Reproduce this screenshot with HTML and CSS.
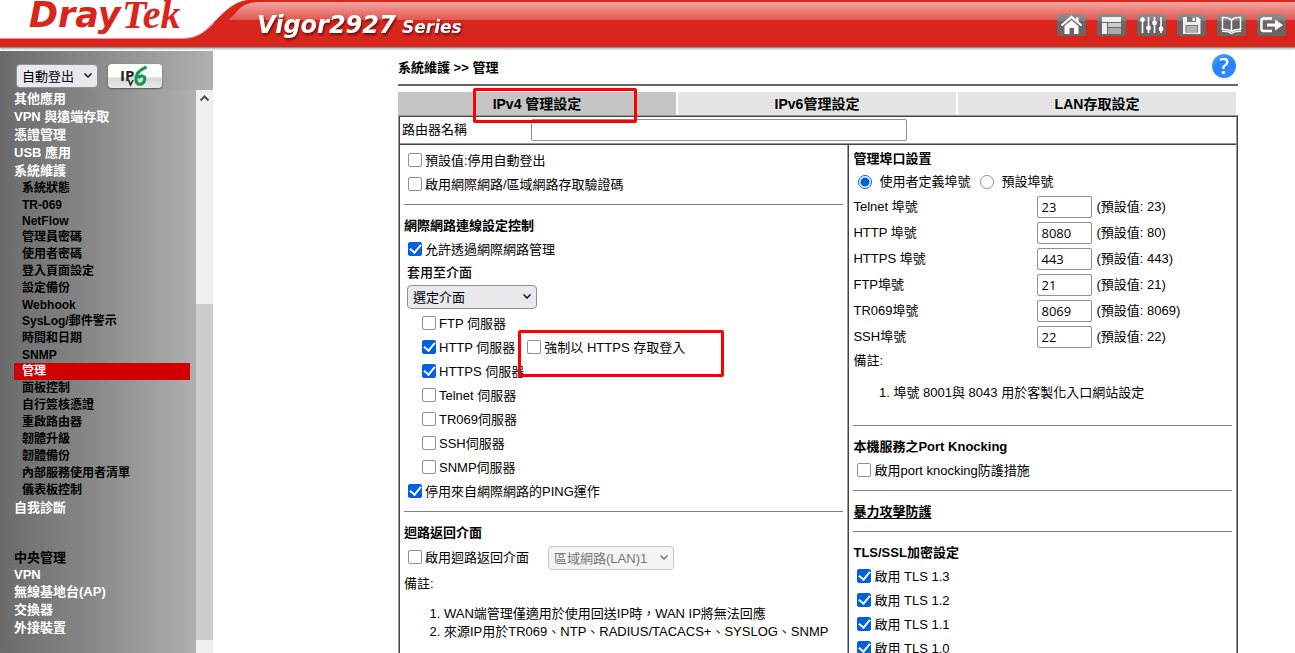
FILE: index.html
```html
<!DOCTYPE html>
<html lang="zh-Hant">
<head>
<meta charset="utf-8">
<title>Vigor2927 Series</title>
<link rel="stylesheet" href="styles.css">
</head>
<body>
<header class="banner">
  <svg class="brand" width="480" height="47" viewBox="0 0 480 47" role="img" aria-label="DrayTek Vigor2927 Series">
    <path d="M184 39C210 38 218 20 229 20L240 8C245 4 250 2 262 2L262 0L0 0L0 39Z" fill="#d9261c"/>
    <path d="M184 47L184 36L230 20H240V47Z" fill="#d9261c"/>
    <path d="M0 0H247C234 2 226 10 214 22C204 32 198 38 184 38H0Z" fill="#fff"/>
    <path d="M0 38.500H184C198 38 206 31 214 23" fill="none" stroke="#f0958f"/>
    <text class="brand-dray" x="29" y="27">Dray</text>
    <text class="brand-tek" x="122" y="28">Tek</text>
    <text class="brand-model" x="257" y="33">Vigor2927</text>
    <text class="brand-series" x="402" y="33">Series</text>
  </svg>
  <nav class="tools" aria-label="工具">
    <button class="tool" aria-label="首頁"><svg width="29" height="22" viewBox="0 0 29 22"><path d="M4.500 11.500L14.500 3L24.500 11.500" fill="none" stroke="#fff" stroke-width="2.200"/><path d="M19 3.500H21.500V8L19 6Z" fill="#fff"/><path d="M7.500 12L14.500 6.200L21.500 12V20H17V14H12.500V20H7.500Z" fill="#fff"/></svg></button>
    <button class="tool" aria-label="儀表板"><svg width="29" height="22" viewBox="0 0 29 22"><path d="M5 3H24V8H5ZM5 9H10V20H5Z" fill="#eee"/><path d="M11 9H24V13H11Z" fill="#ccc"/><path d="M11 14H24V20H11Z" fill="#aaa"/></svg></button>
    <button class="tool" aria-label="設定"><svg width="29" height="22" viewBox="0 0 29 22"><path d="M5.500 3V19M11.500 3V19M17.500 3V19M24 3V19" stroke="#fff" stroke-width="1.600"/><g fill="#fff"><circle cx="5.500" cy="6" r="2.400"/><circle cx="11.500" cy="14" r="2.400"/><circle cx="17.500" cy="9" r="2.400"/><circle cx="24" cy="15" r="2.400"/></g></svg></button>
    <button class="tool" aria-label="儲存"><svg width="29" height="22" viewBox="0 0 29 22"><path d="M6 3H21L23.500 5.500V20H6Z" fill="#eee"/><path d="M10 3H19V8H10ZM8.500 11H21V18.500H8.500Z" fill="#777"/><path d="M15.500 3.500H18V7H15.500ZM9.500 12.500H20V13.500H9.500ZM9.500 14.500H20V15.500H9.500ZM9.500 16.500H20V17.500H9.500Z" fill="#eee"/></svg></button>
    <button class="tool" aria-label="說明文件"><svg width="29" height="22" viewBox="0 0 29 22"><path d="M14.500 6C12 3.500 9 3.200 5.500 3.500V15.500C9 15.200 12 15.500 14.500 17.500C17 15.500 20 15.200 23.500 15.500V3.500C20 3.200 17 3.500 14.500 6ZM14.500 6V17" fill="none" stroke="#fff" stroke-width="1.500"/><path d="M5 17.500C9 17.200 12 17.500 14.500 19.500C17 17.500 20 17.200 24 17.500" fill="none" stroke="#fff" stroke-width="1.200"/></svg></button>
    <button class="tool" aria-label="登出"><svg width="29" height="22" viewBox="0 0 29 22"><path d="M15 4.500H6.500Q4.500 4.500 4.500 6.500V15Q4.500 17 6.500 17H15" fill="none" stroke="#fff" stroke-width="2.400"/><path d="M10 9.500H18V5.500L26 11L18 16.500V12.500H10Z" fill="#fff"/></svg></button>
  </nav>
</header>
<div class="page">
  <aside class="side">
    <div class="side-top">
      <span class="pick pick-side"><select class="drop" aria-label="自動登出"><option>自動登出</option></select><svg class="chev" width="8" height="5" viewBox="0 0 8 5"><path d="M0.500 0.500L4 4L7.500 0.500"/></svg></span>
      <button class="ipv6" aria-label="IPv6"><svg width="54" height="24" viewBox="0 0 54 24"><text class="ip" x="12" y="17">IP</text><path d="M20.500 16L22.500 21L25 16" fill="none" stroke="#222" stroke-width="1.500"/><path d="M38.500 3C31 6 27.500 11 28 16C28.500 21.500 35 21.500 36.500 16.500C38 11.500 33 10.500 30 14" fill="none" stroke="#0d9a4e" stroke-width="3"/></svg></button>
    </div>
    <div class="side-body">
      <nav class="menu" aria-label="主選單">
        <a href="#" class="item">其他應用</a>
        <a href="#" class="item">VPN 與遠端存取</a>
        <a href="#" class="item">憑證管理</a>
        <a href="#" class="item">USB 應用</a>
        <a href="#" class="item">系統維護</a>
        <a href="#" class="sub">系統狀態</a>
        <a href="#" class="sub latin">TR-069</a>
        <a href="#" class="sub latin">NetFlow</a>
        <a href="#" class="sub">管理員密碼</a>
        <a href="#" class="sub">使用者密碼</a>
        <a href="#" class="sub">登入頁面設定</a>
        <a href="#" class="sub">設定備份</a>
        <a href="#" class="sub latin">Webhook</a>
        <a href="#" class="sub">SysLog/郵件警示</a>
        <a href="#" class="sub">時間和日期</a>
        <a href="#" class="sub latin">SNMP</a>
        <a href="#" class="sub current">管理</a>
        <a href="#" class="sub">面板控制</a>
        <a href="#" class="sub">自行簽核憑證</a>
        <a href="#" class="sub">重啟路由器</a>
        <a href="#" class="sub">韌體升級</a>
        <a href="#" class="sub">韌體備份</a>
        <a href="#" class="sub">內部服務使用者清單</a>
        <a href="#" class="sub">儀表板控制</a>
        <a href="#" class="item">自我診斷</a>
        <span class="item section">中央管理</span>
        <a href="#" class="item latin">VPN</a>
        <a href="#" class="item">無線基地台(AP)</a>
        <a href="#" class="item">交換器</a>
        <a href="#" class="item">外接裝置</a>
      </nav>
      <div class="bar" aria-hidden="true">
        <svg width="17" height="17" viewBox="0 0 17 17"><path d="M4.500 10.500L8.500 6.500L12.500 10.500" fill="none" stroke="#505050" stroke-width="2"/></svg>
        <div class="bar-above"></div>
        <div class="bar-thumb"></div>
        <div class="bar-below"></div>
      </div>
    </div>
  </aside>
  <main class="main">
    <div class="crumb">
      <h1 class="crumb-text">系統維護 &gt;&gt; 管理</h1>
      <button class="help" aria-label="說明">?</button>
    </div>
    <div class="tabs">
      <button class="tab active">IPv4 管理設定<span class="mark mark-tab"></span></button>
      <button class="tab">IPv6管理設定</button>
      <button class="tab">LAN存取設定</button>
    </div>
    <form class="panel">
      <div class="name-row">
        <label for="rname" class="name-label">路由器名稱</label>
        <input type="text" id="rname" class="box name-box">
      </div>
      <div class="cols">
        <section class="col col-left">
          <label class="row"><input type="checkbox" class="tick">預設值:停用自動登出</label>
          <label class="row"><input type="checkbox" class="tick">啟用網際網路/區域網路存取驗證碼</label>
          <hr class="rule">
          <h2 class="head">網際網路連線設定控制</h2>
          <label class="row"><input type="checkbox" class="tick" checked>允許透過網際網路管理</label>
          <label class="apply" for="iface">套用至介面</label>
          <div class="apply-pick"><span class="pick pick-iface"><select class="drop" id="iface"><option>選定介面</option></select><svg class="chev" width="8" height="5" viewBox="0 0 8 5"><path d="M0.500 0.500L4 4L7.500 0.500"/></svg></span></div>
          <div class="servers">
            <label class="row"><input type="checkbox" class="tick">FTP 伺服器</label>
            <div class="pair">
              <label class="row"><input type="checkbox" class="tick" checked>HTTP 伺服器</label>
              <label class="row forced"><input type="checkbox" class="tick">強制以 HTTPS 存取登入<span class="mark mark-https"></span></label>
            </div>
            <label class="row"><input type="checkbox" class="tick" checked>HTTPS 伺服器</label>
            <label class="row"><input type="checkbox" class="tick">Telnet 伺服器</label>
            <label class="row"><input type="checkbox" class="tick">TR069伺服器</label>
            <label class="row"><input type="checkbox" class="tick">SSH伺服器</label>
            <label class="row"><input type="checkbox" class="tick">SNMP伺服器</label>
          </div>
          <label class="row"><input type="checkbox" class="tick" checked>停用來自網際網路的PING運作</label>
          <hr class="rule">
          <h2 class="head">迴路返回介面</h2>
          <div class="loop">
            <label class="row"><input type="checkbox" class="tick">啟用迴路返回介面</label>
            <span class="pick pick-lan"><select class="drop" aria-label="迴路返回介面" disabled><option>區域網路(LAN)1</option></select><svg class="chev" width="8" height="5" viewBox="0 0 8 5"><path d="M0.500 0.500L4 4L7.500 0.500"/></svg></span>
          </div>
          <p class="note">備註:</p>
          <ol class="list">
            <li>WAN端管理僅適用於使用回送IP時，WAN IP將無法回應</li>
            <li>來源IP用於TR069、NTP、RADIUS/TACACS+、SYSLOG、SNMP</li>
          </ol>
        </section>
        <section class="col col-right">
          <h2 class="head head-ports">管理埠口設置</h2>
          <div class="radios">
            <label class="radio"><input type="radio" name="port" class="dot" checked>使用者定義埠號</label>
            <label class="radio"><input type="radio" name="port" class="dot">預設埠號</label>
          </div>
          <div class="port"><label for="p1">Telnet 埠號</label><input type="text" class="box" id="p1" value="23"><span>(預設值: 23)</span></div>
          <div class="port"><label for="p2">HTTP 埠號</label><input type="text" class="box" id="p2" value="8080"><span>(預設值: 80)</span></div>
          <div class="port"><label for="p3">HTTPS 埠號</label><input type="text" class="box" id="p3" value="443"><span>(預設值: 443)</span></div>
          <div class="port"><label for="p4">FTP埠號</label><input type="text" class="box" id="p4" value="21"><span>(預設值: 21)</span></div>
          <div class="port"><label for="p5">TR069埠號</label><input type="text" class="box" id="p5" value="8069"><span>(預設值: 8069)</span></div>
          <div class="port"><label for="p6">SSH埠號</label><input type="text" class="box" id="p6" value="22"><span>(預設值: 22)</span></div>
          <p class="note note-ports">備註:</p>
          <ol class="list list-ports">
            <li>埠號 8001與 8043 用於客製化入口網站設定</li>
          </ol>
          <hr class="rule">
          <h2 class="head">本機服務之Port Knocking</h2>
          <label class="row"><input type="checkbox" class="tick">啟用port knocking防護措施</label>
          <hr class="rule">
          <a href="#" class="head brute">暴力攻擊防護</a>
          <hr class="rule">
          <h2 class="head">TLS/SSL加密設定</h2>
          <label class="row"><input type="checkbox" class="tick" checked>啟用 TLS 1.3</label>
          <label class="row"><input type="checkbox" class="tick" checked>啟用 TLS 1.2</label>
          <label class="row"><input type="checkbox" class="tick" checked>啟用 TLS 1.1</label>
          <label class="row"><input type="checkbox" class="tick" checked>啟用 TLS 1.0</label>
        </section>
      </div>
    </form>
  </main>
</div>
</body>
</html>
```
FILE: styles.css
```css
* { box-sizing: border-box; }

body {
  margin: 0;
  height: 100vh;
  display: flex;
  flex-direction: column;
  overflow: hidden;
  background: #fff;
  color: #000;
  font: 13px/24px "Liberation Sans", "Noto Sans CJK TC", sans-serif;
}

button, select, input { font: inherit; color: inherit; margin: 0; }
button { border: 0; padding: 0; }
h1, h2, p { margin: 0; font-size: inherit; }

/* Banner */
.banner {
  flex: none;
  display: flex;
  justify-content: space-between;
  align-items: flex-start;
  height: 47px;
  margin-bottom: 4px;
  background: linear-gradient(#d9261c 2px, #f2a5a0 2px, #e2574f 20px, #d9261c 20px);
  box-shadow: 0 1px 0 #8f8f8f, 0 2px 2px #aaa;
}
.brand { display: block; overflow: visible; }
.brand-dray { font: italic 700 35px "DejaVu Sans", sans-serif; fill: #d9261c; }
.brand-tek { font: italic 700 40px "Liberation Serif", serif; fill: #d9261c; }
.brand-model, .brand-series { fill: #fff; filter: drop-shadow(1px 2px 1px #611); }
.brand-model { font: italic 700 24px "DejaVu Sans", sans-serif; }
.brand-series { font: italic 700 17px "DejaVu Sans", sans-serif; }
.tools { display: flex; gap: 11px; padding: 14px 9px 0 0; }
.tool {
  width: 29px;
  height: 22px;
  border-radius: 3px;
  background: linear-gradient(#9a8b8a, #857a79 7px, #6b6565 7px, #6b6565);
}
.tool svg { display: block; }

/* Sidebar */
.page { flex: 1; min-height: 0; display: flex; }
.side { width: 213px; flex: none; display: flex; flex-direction: column; }
.side-top {
  display: flex;
  gap: 10px;
  height: 39px;
  padding: 13px 16px 0;
  background: linear-gradient(to right, #6b6b6b, #b0b0b0);
}
.side-body { flex: 1; min-height: 0; display: flex; }
.menu {
  flex: 1;
  overflow: hidden;
  padding-left: 14px;
  background: linear-gradient(to right, #6b6b6b, #8a8a8a 50%, #b0b0b0);
}
.item, .sub { display: block; font-weight: 700; text-decoration: none; }
.item { color: #fff; line-height: 18px; }
.sub { color: #000; font-size: 12px; line-height: 17px; padding-left: 8px; margin-right: 6px; }
.latin { line-height: 16px; }
.current { color: #fff; background: #d00000; }
.section { color: #000; margin-top: 32px; }
.bar { width: 17px; display: flex; flex-direction: column; background: #f0f0f0; }
.bar-above { flex: 197; }
.bar-thumb { flex: 335; background: #cdcdcd; }
.bar-below { flex: 13; }
.ipv6 {
  width: 54px;
  height: 24px;
  border-radius: 4px;
  background: linear-gradient(#fff 50%, #d8d8d8 60%, #e8e8e8);
  box-shadow: 0 1px 2px #555;
}
.ipv6 svg { display: block; }
.ip { font: 700 15px "Open Sans", sans-serif; fill: #222; }

/* Controls */
.pick { position: relative; display: block; }
.pick-side { width: 82px; }
.pick-iface { width: 130px; }
.pick-lan { width: 126px; }
.drop {
  display: block;
  appearance: none;
  width: 100%;
  height: 24px;
  padding: 0 5px;
  border: 1px solid #8f8f9d;
  border-radius: 4px;
  background: #e9e9ed;
}
.drop:disabled { color: #77777a; background: #f4f4f6; border-color: #c7c7ce; opacity: 1; }
.chev { position: absolute; right: 6px; top: 9px; pointer-events: none; }
.chev path { fill: none; stroke: #111; stroke-width: 1.5; }
.drop:disabled + .chev path { stroke: #777; }
.box {
  height: 22px;
  padding: 0 3px;
  border: 1px solid #8f8f9d;
  border-radius: 2px;
  background: #fff;
  font-family: "Open Sans", sans-serif;
}
.tick, .dot {
  appearance: none;
  flex: none;
  width: 14px;
  height: 14px;
  border: 1px solid #8f8f9d;
  background: #fff;
}
.tick { border-radius: 2px; display: grid; place-content: center; }
.tick:checked { background: #0060df; border-color: #0060df; }
.tick:checked::before {
  content: "";
  width: 5px;
  height: 9px;
  margin-bottom: 3px;
  border: solid #fff;
  border-width: 0 2px 2px 0;
  transform: rotate(40deg);
}
.dot { border-radius: 50%; }
.dot:checked { border: 1px solid #0060df; background: radial-gradient(#0060df 4px, #fff 5px); }

/* Content */
.main { flex: 1; min-width: 0; padding: 0 57px 0 185px; }
.crumb {
  display: flex;
  justify-content: space-between;
  align-items: center;
  height: 35px;
  border-bottom: 2px solid #666;
}
.crumb-text { font-size: 13px; }
.help {
  width: 24px;
  height: 24px;
  margin: 0 2px 4px 0;
  border-radius: 50%;
  background: radial-gradient(circle at 60% 75%, #2b8cff, #2a80ff 50%, #66b2ff);
  color: #fff;
  font: 600 21px/24px "Open Sans", sans-serif;
}
.tabs { display: grid; grid-template-columns: repeat(3, 1fr); gap: 2px; margin: 6px 2px 0 0; }
.tab {
  position: relative;
  height: 23px;
  background: #e4e4e4;
  font-size: 14px;
  line-height: 24px;
  font-weight: 700;
}
.tab.active { background: #c5c5c5; }
.mark { position: absolute; z-index: 1; border: 3px solid #f00; border-radius: 2px; pointer-events: none; }
.mark-tab { left: 75px; top: -4px; width: 164px; height: 35px; }
.mark-https { left: -9px; top: -6px; width: 206px; height: 47px; }
.panel { border: 2px ridge #999; }
.name-row {
  display: flex;
  align-items: center;
  height: 28px;
  padding-left: 2px;
  border-bottom: 2px ridge #999;
}
.name-label { width: 129px; }
.name-box { width: 376px; }
.cols { display: grid; grid-template-columns: 450fr 387fr; }
.col { min-width: 0; padding: 4px 4px 12px; }
.col-left { border-right: 2px ridge #999; }
.col-right { padding-top: 3px; }
.row { display: flex; align-items: center; gap: 3px; height: 24px; padding-left: 4px; }
.row .tick { margin-bottom: 2px; }
.rule { height: 1px; margin: 7px 0 9px; border: 0; background: #808080; }
.head { display: block; font-weight: 700; height: 24px; }
.head-ports { height: 22px; line-height: 22px; }
.apply { display: block; padding-left: 3px; font-weight: 500; line-height: 22px; }
.apply-pick { height: 28px; padding: 1px 3px 0; }
.servers { padding-left: 14px; }
.pair { display: flex; gap: 12px; }
.forced { position: relative; padding-left: 0; }
.loop { display: flex; align-items: center; gap: 19px; height: 26px; }
.note { line-height: 26px; }
.note-ports { line-height: 22px; }
.list { margin: 8px 0 0; padding-left: 40px; line-height: 18px; }
.list-ports { margin: 12px 0 23px; }
.radios { display: flex; gap: 10px; height: 24px; padding-left: 5px; }
.radio { display: flex; align-items: center; gap: 7px; }
.port { display: flex; align-items: center; gap: 4px; height: 26px; }
.port label { width: 180px; }
.port .box { width: 55px; }
.brute { color: #000; text-underline-offset: 2px; }
```
